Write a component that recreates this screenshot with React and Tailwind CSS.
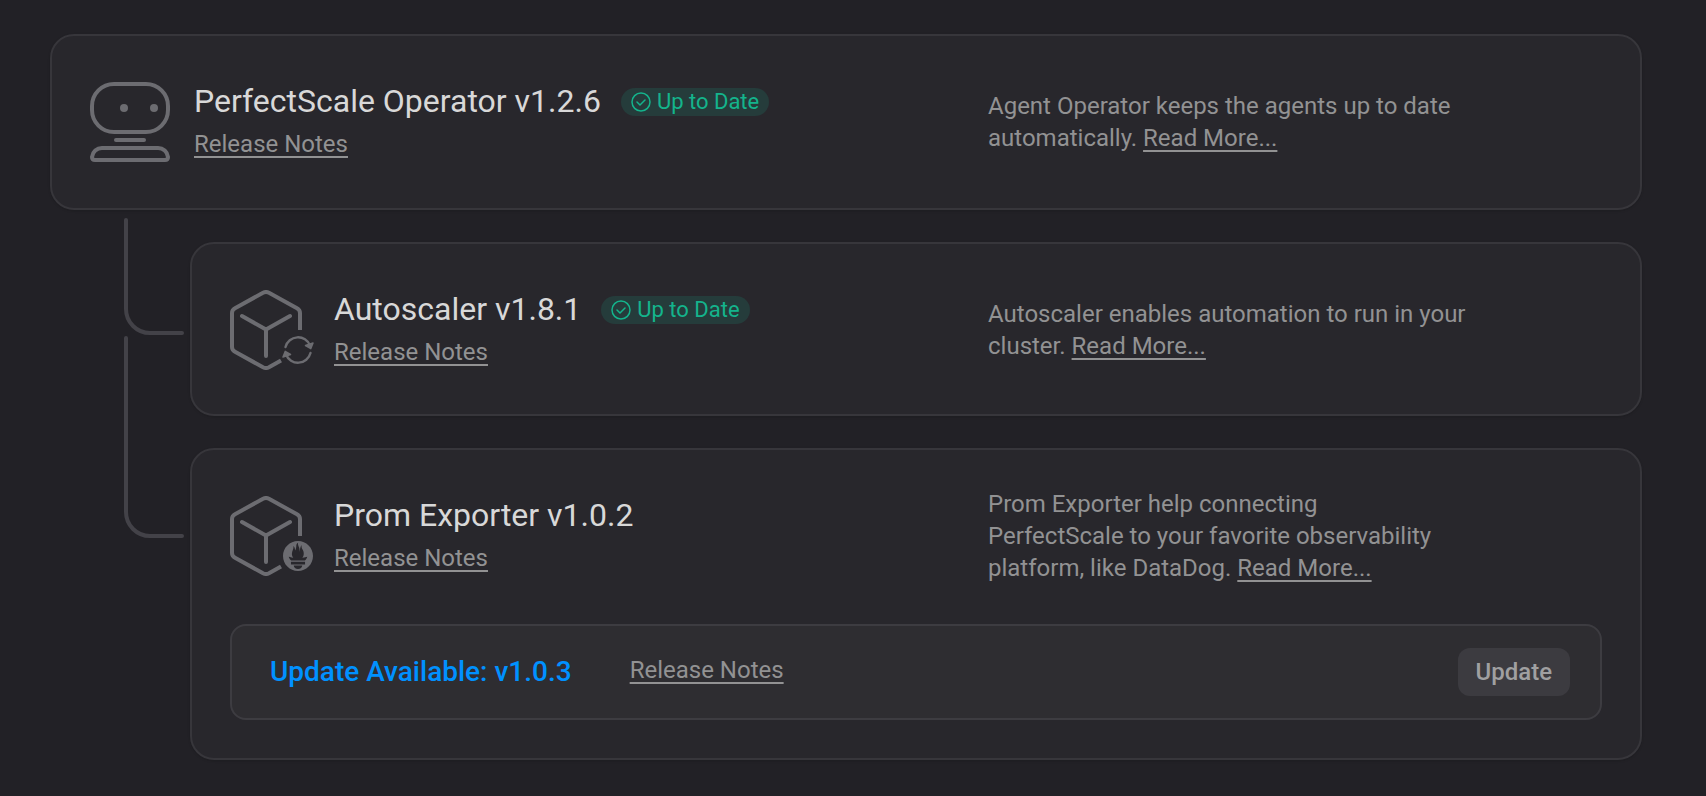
import React from 'react';
import { SiPrometheus } from 'react-icons/si';

function OperatorIcon() {
  return (
    <svg className="w-20 h-20 shrink-0 text-[#6c6c71]" viewBox="0 0 80 80" fill="none" stroke="currentColor" strokeWidth="4" aria-hidden="true">
      <rect x="2" y="2" width="76" height="48" rx="22" />
      <circle cx="34" cy="26" r="4" fill="currentColor" stroke="none" />
      <circle cx="64" cy="26" r="4" fill="currentColor" stroke="none" />
      <path d="M26 58H54" strokeLinecap="round" />
      <path d="M12 66H68A10 10 0 0 1 78 75Q78 78 75 78H5Q2 78 2 75A10 10 0 0 1 12 66Z" />
    </svg>
  );
}

function Cube() {
  return (
    <svg className="w-20 h-20" viewBox="0 0 80 80" fill="none" stroke="currentColor" strokeWidth="4" aria-hidden="true">
      <path d="M70 40V23Q70 20 67 18.300L39 2.700Q36 1.300 33 2.700L5 18.300Q2 20 2 23V57Q2 60 5 61.700L33 77.300Q36 78.700 39 77.300L51 70.400" />
      <path d="M12 26L36 39.500L60 26M36 39.500V66" strokeLinecap="round" strokeLinejoin="round" />
    </svg>
  );
}

function AutoscalerIcon() {
  return (
    <div className="relative w-20 h-20 shrink-0 text-[#6c6c71]">
      <Cube />
      <svg className="absolute -right-1 bottom-1 w-8 h-8" viewBox="0 0 32 32" fill="none" stroke="currentColor" strokeWidth="2.4" aria-hidden="true">
        <path d="M3.500 13A12.900 12.900 0 0 1 28 11.500M28.500 19A12.900 12.900 0 0 1 4 20.500" strokeLinecap="round" />
        <path d="M23.500 11.500L31 9L28.800 14.600ZM8.500 20.500L1 23L3.200 17.400Z" fill="currentColor" strokeWidth="1.5" strokeLinejoin="round" />
      </svg>
    </div>
  );
}

function ExporterIcon() {
  return (
    <div className="relative w-20 h-20 shrink-0 text-[#6c6c71]">
      <Cube />
      <SiPrometheus className="absolute -right-1 bottom-1 w-8 h-8 p-px" aria-hidden="true" />
    </div>
  );
}

function TextLink({ children }) {
  return (
    <a href="#" className="underline decoration-2 underline-offset-4 text-[#929293] hover:text-[#d8d8d8]">
      {children}
    </a>
  );
}

function Badge() {
  return (
    <span className="flex items-center gap-1 h-7 mt-0.5 pl-2 pr-2.5 rounded-full bg-[#253c3b] text-[22px] leading-7 text-[#14b48c]">
      <svg className="w-6 h-6" viewBox="0 0 24 24" fill="none" stroke="currentColor" strokeWidth="1.5" aria-hidden="true">
        <circle cx="12" cy="12" r="9" />
        <path d="M8 12L11 15L16 10" strokeLinecap="round" strokeLinejoin="round" />
      </svg>
      Up to Date
    </span>
  );
}

function Card({ icon, title, upToDate, className = 'pb-[38px]', description, children }) {
  return (
    <section className={`flex-1 min-w-0 flex flex-col gap-10 px-[38px] pt-[38px] rounded-3xl border-2 border-[#37363b] bg-[#28272c] shadow-sm ${className}`}>
      <div className="flex items-center min-h-24">
        {icon}
        <div className="flex-1 min-w-0 ml-6">
          <div className="flex items-center gap-5">
            <h2 className="text-[32px] leading-[38px] text-[#d8d8d8]">{title}</h2>
            {upToDate && <Badge />}
          </div>
          <div className="mt-1.5 text-2xl leading-9">
            <TextLink>Release Notes</TextLink>
          </div>
        </div>
        <p className="w-[614px] pr-30 text-2xl leading-8 text-[#929293]">
          {description} <TextLink>Read More...</TextLink>
        </p>
      </div>
      {children}
    </section>
  );
}

function Branch({ path, className }) {
  return (
    <div className="w-[140px] shrink-0 pl-[74px]">
      <svg className={`w-[60px] text-[#434248] ${className}`} fill="none" stroke="currentColor" strokeWidth="4" strokeLinecap="round" aria-hidden="true">
        <path d={path} />
      </svg>
    </div>
  );
}

function App() {
  return (
    <main className="min-h-screen pt-[34px] pb-9 pl-[50px] pr-16 flex flex-col gap-8 bg-[#222126] font-[Roboto,sans-serif]">
      <Card
        icon={<OperatorIcon />}
        title="PerfectScale Operator v1.2.6"
        upToDate
        description="Agent Operator keeps the agents up to date automatically."
      />

      <div className="flex items-start">
        <Branch className="h-[117px] -mt-6" path="M2 2V91A24 24 0 0 0 26 115H58" />
        <Card
          icon={<AutoscalerIcon />}
          title="Autoscaler v1.8.1"
          upToDate
          className="pb-9"
          description="Autoscaler enables automation to run in your cluster."
        />
      </div>

      <div className="flex items-start">
        <Branch className="h-[202px] -mt-28" path="M2 2V176A24 24 0 0 0 26 200H58" />
        <Card
          icon={<ExporterIcon />}
          title="Prom Exporter v1.0.2"
          description={
            <>
              Prom Exporter help connecting
              <br />
              PerfectScale to your favorite observability platform, like DataDog.
            </>
          }
        >
          <div className="flex items-center h-24 pl-[38px] pr-[30px] rounded-2xl border-2 border-[#3d3c41] bg-[#2e2d31]">
            <span className="text-[28px] leading-8 font-medium text-[#0091ff]">Update Available: v1.0.3</span>
            <div className="ml-[58px] pb-1 text-2xl leading-8">
              <TextLink>Release Notes</TextLink>
            </div>
            <button type="button" className="ml-auto h-12 px-[18px] rounded-xl bg-[#3c3b40] text-2xl font-medium text-[#a0a0a1]">
              Update
            </button>
          </div>
        </Card>
      </div>
    </main>
  );
}

export default App;
